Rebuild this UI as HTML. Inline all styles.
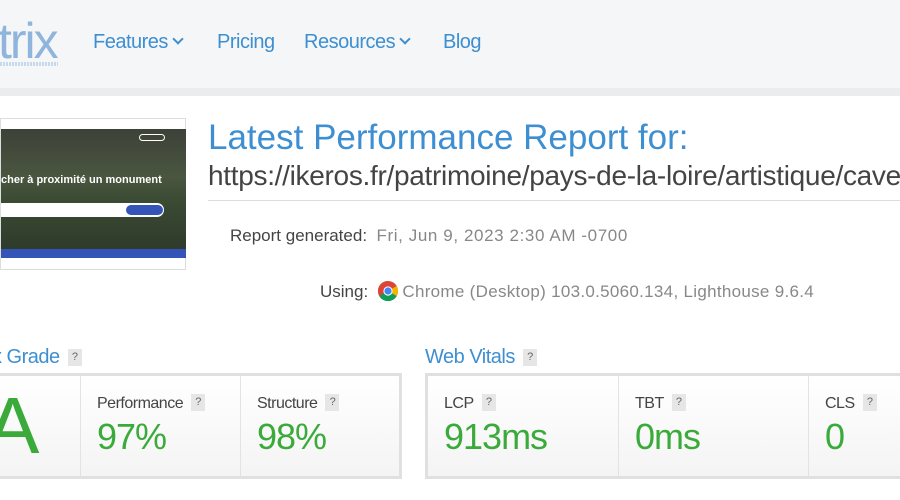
<!DOCTYPE html>
<html><head><meta charset="utf-8"><style>
*{margin:0;padding:0;box-sizing:border-box}
body{width:900px;height:500px;overflow:hidden;background:#fff;font-family:"Liberation Sans",sans-serif;position:relative}
.hdr{position:absolute;left:0;top:0;width:900px;height:88px;background:#f5f6f7}
.band{position:absolute;left:0;top:88px;width:900px;height:8px;background:#ebeced}
.logo{position:absolute;left:-2px;top:12px;font-size:50px;color:#8fb5dc;letter-spacing:-2px}
.logoline{position:absolute;left:0;top:62px;width:58px;height:4px;background:repeating-linear-gradient(90deg,#c5d8ec 0 2px,transparent 2px 3px)}
.nav{position:absolute;top:31px;font-size:20px;color:#3d8fd1;letter-spacing:-0.5px}
.chev{display:inline-block;width:8px;height:8px;border-right:2.5px solid #3d8fd1;border-bottom:2.5px solid #3d8fd1;transform:rotate(45deg);margin-left:6px;position:relative;top:-5px}
.thumb{position:absolute;left:0;top:118px;width:186px;height:152px;border:1px solid #ddd;background:#fff}
.img{position:absolute;left:0;top:10px;width:185px;height:120px;background:linear-gradient(180deg,#3d4138 0%,#4a5640 40%,#3a4a33 60%,#2f3b2b 100%)}
.blue{position:absolute;left:0;top:130px;width:185px;height:9px;background:#3554b7}
.t{position:absolute;color:#fff;font-size:8px}
.title{position:absolute;left:208px;top:118px;font-size:35px;color:#3d8fd1;white-space:nowrap}
.url{position:absolute;left:208px;top:160px;font-size:28px;color:#444;white-space:nowrap;letter-spacing:-0.3px}
.line{position:absolute;left:208px;top:200px;width:692px;height:1px;background:#ddd}
.lab{position:absolute;font-size:17px;color:#444;white-space:nowrap}
.lab span{color:#888}
.h2{position:absolute;top:346px;font-size:20px;color:#3d8fd1;letter-spacing:-0.5px}
.q{display:inline-block;width:14px;height:17px;background:#e6e6e6;color:#666;font-size:11px;text-align:center;line-height:17px;vertical-align:3px;margin-left:8px}
.box{position:absolute;top:373px;height:106px;border:3px solid #e0e0e0;background:linear-gradient(#fff,#f4f4f4)}
.cell{position:absolute;top:0;height:100px;border-left:1px solid #e3e3e3}
.cl{position:absolute;left:16px;top:18px;font-size:16px;color:#444;letter-spacing:-0.5px;white-space:nowrap}
.cv{position:absolute;left:16px;top:40px;font-size:36px;color:#3aab3a;letter-spacing:-1px}
</style></head><body>
<div class="hdr"></div><div class="band"></div>
<div class="logo">trix</div><div class="logoline"></div>
<div class="nav" style="left:93px">Features<i class="chev"></i></div>
<div class="nav" style="left:217px">Pricing</div>
<div class="nav" style="left:304px">Resources<i class="chev"></i></div>
<div class="nav" style="left:443px">Blog</div>

<div class="thumb"><div class="img">
<div style="position:absolute;left:138px;top:5px;width:26px;height:7px;border:1px solid #fff;border-radius:4px"></div>
<div class="t" style="left:0;top:45px;font-size:11px;font-weight:bold">cher à proximité un monument</div>
<div style="position:absolute;left:0;top:74px;width:163px;height:14px;background:#fff;border-radius:0 7px 7px 0"></div>
<div style="position:absolute;left:125px;top:76px;width:37px;height:10px;background:#3554b7;border-radius:5px"></div>
</div><div class="blue"></div></div>

<div class="title">Latest Performance Report for:</div>
<div class="url">https://ikeros.fr/patrimoine/pays-de-la-loire/artistique/cave-</div>
<div class="line"></div>
<div class="lab" style="left:230px;top:226px">Report generated: &nbsp;<span style="letter-spacing:0.6px">Fri, Jun 9, 2023 2:30 AM -0700</span></div>
<div class="lab" style="left:320px;top:281px">Using: &nbsp;<svg width="20" height="20" viewBox="0 0 20 20" style="vertical-align:-4px"><circle cx="10" cy="10" r="10" fill="#db4437"/><path d="M10 10 L18.66 15 A10 10 0 0 1 1.34 15 Z" fill="#0f9d58"/><path d="M10 10 L1.34 15 A10 10 0 0 1 10 0 Z" fill="#db4437"/><path d="M10 10 L18.66 15 A10 10 0 0 1 1.34 15 Z" fill="#0f9d58"/><path d="M10 10 L18.66 5 A10 10 0 0 1 18.66 15 Z" fill="#f4b400"/><circle cx="10" cy="10" r="4.6" fill="#fff"/><circle cx="10" cy="10" r="3.6" fill="#4285f4"/></svg> <span style="letter-spacing:0.3px">Chrome (Desktop) 103.0.5060.134, Lighthouse 9.6.4</span></div>

<div class="h2" style="left:-8px">x Grade<span class="q">?</span></div>
<div class="h2" style="left:425px">Web Vitals<span class="q">?</span></div>

<div class="box" style="left:-3px;width:405px">
<div style="position:absolute;left:-14px;top:10px;font-size:80px;color:#3aab3a;line-height:80px">A</div>
<div class="cell" style="left:80px;width:160px"><div class="cl">Performance<span class="q">?</span></div><div class="cv">97%</div></div>
<div class="cell" style="left:240px;width:160px"><div class="cl">Structure<span class="q">?</span></div><div class="cv">98%</div></div>
</div>
<div class="box" style="left:425px;width:480px">
<div class="cell" style="left:0;width:190px;border-left:none"><div class="cl">LCP<span class="q">?</span></div><div class="cv">913ms</div></div>
<div class="cell" style="left:190px;width:190px"><div class="cl">TBT<span class="q">?</span></div><div class="cv">0ms</div></div>
<div class="cell" style="left:380px;width:100px"><div class="cl">CLS<span class="q">?</span></div><div class="cv">0</div></div>
</div>
</body></html>
